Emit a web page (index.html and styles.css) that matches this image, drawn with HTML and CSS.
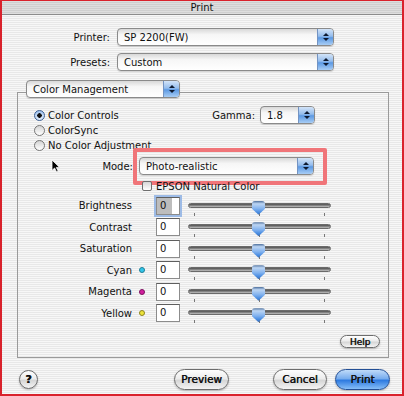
FILE: index.html
```html
<!DOCTYPE html>
<html lang="en">
<head>
    <meta charset="UTF-8">
    <title>Print</title>
    <link rel="stylesheet" href="styles.css">
</head>
<body>
<div class="window">
    <div class="titlebar">Print</div>

    <div class="content">
        <div class="field-row">
            <span class="field-label">Printer:</span>
            <div class="popup popup-wide">
                <span class="popup-label">SP 2200(FW)</span>
                <span class="popup-cap"></span>
            </div>
        </div>
        <div class="field-row">
            <span class="field-label">Presets:</span>
            <div class="popup popup-wide">
                <span class="popup-label">Custom</span>
                <span class="popup-cap"></span>
            </div>
        </div>

        <!-- Color Management panel -->
        <div class="group">
            <div class="popup popup-panel">
                <span class="popup-label">Color Management</span>
                <span class="popup-cap"></span>
            </div>

            <div class="group-top">
                <div class="radio-list">
                    <div class="radio"><span class="radio-dot checked"></span>Color Controls</div>
                    <div class="radio"><span class="radio-dot"></span>ColorSync</div>
                    <div class="radio"><span class="radio-dot"></span>No Color Adjustment</div>
                </div>
                <div class="gamma">
                    <span>Gamma:</span>
                    <div class="popup popup-gamma">
                        <span class="popup-label">1.8</span>
                        <span class="popup-cap"></span>
                    </div>
                </div>
            </div>

            <div class="mode-row">
                <span class="mode-label">Mode:</span>
                <div class="mode-wrap">
                    <div class="popup popup-mode">
                        <span class="popup-label">Photo-realistic</span>
                        <span class="popup-cap"></span>
                    </div>
                    <div class="highlight"></div>
                </div>
            </div>

            <div class="check-row">
                <span class="checkbox"></span>EPSON Natural Color
            </div>

            <div class="sliders">
                <div class="slider-row">
                    <span class="slider-label">Brightness</span>
                    <span class="swatch"></span>
                    <span class="num-field focused">0</span>
                    <div class="slider"><div class="track"></div><div class="ticks"><i></i><i></i><i></i></div><span class="thumb"></span></div>
                </div>
                <div class="slider-row">
                    <span class="slider-label">Contrast</span>
                    <span class="swatch"></span>
                    <span class="num-field">0</span>
                    <div class="slider"><div class="track"></div><div class="ticks"><i></i><i></i><i></i></div><span class="thumb"></span></div>
                </div>
                <div class="slider-row">
                    <span class="slider-label">Saturation</span>
                    <span class="swatch"></span>
                    <span class="num-field">0</span>
                    <div class="slider"><div class="track"></div><div class="ticks"><i></i><i></i><i></i></div><span class="thumb"></span></div>
                </div>
                <div class="slider-row">
                    <span class="slider-label">Cyan</span>
                    <span class="swatch cyan"></span>
                    <span class="num-field">0</span>
                    <div class="slider"><div class="track"></div><div class="ticks"><i></i><i></i><i></i></div><span class="thumb"></span></div>
                </div>
                <div class="slider-row">
                    <span class="slider-label">Magenta</span>
                    <span class="swatch magenta"></span>
                    <span class="num-field">0</span>
                    <div class="slider"><div class="track"></div><div class="ticks"><i></i><i></i><i></i></div><span class="thumb"></span></div>
                </div>
                <div class="slider-row">
                    <span class="slider-label">Yellow</span>
                    <span class="swatch yellow"></span>
                    <span class="num-field">0</span>
                    <div class="slider"><div class="track"></div><div class="ticks"><i></i><i></i><i></i></div><span class="thumb"></span></div>
                </div>
            </div>

            <div class="help-row">
                <button class="push push-small">Help</button>
            </div>

            <!-- mouse pointer -->
            <svg class="cursor" width="10" height="14" viewBox="0 0 10 14">
                <path d="M1 1 V11.5 L3.6 9 L5.6 13 L7.2 12.2 L5.3 8.4 H8.6 Z" fill="#000" stroke="#fff" stroke-width="0.8"/>
            </svg>
        </div>

        <div class="buttons">
            <button class="push round-help">?</button>
            <button class="push btn-preview">Preview</button>
            <button class="push btn-cancel">Cancel</button>
            <button class="push push-default btn-print">Print</button>
        </div>
    </div>
</div>
</body>
</html>
```

FILE: styles.css
```css
/* Aqua print sheet */
* {
    box-sizing: border-box;
}

body {
    margin: 0;
    font-family: "DejaVu Sans", "Lucida Grande", sans-serif;
    font-size: 10px;
    color: #111;
}

.window {
    width: 404px;
    height: 396px;
    border: 2px solid #d9222c;
    border-top-width: 1px;
    background: repeating-linear-gradient(to bottom, #f7f7f7 0 1px, #e8e8e8 1px 2px);
}

.titlebar {
    height: 14px;
    line-height: 13px;
    text-align: center;
    background: repeating-linear-gradient(to bottom, #dedede 0 1px, #cfcfcf 1px 2px);
    border-bottom: 1px solid #8c8c8c;
}

.content {
    padding: 13px 13px 0 15px;
}

.field-row {
    display: flex;
    align-items: center;
}

.field-row + .field-row {
    margin-top: 7px;
}

.field-label {
    width: 93px;
    margin-right: 7px;
    text-align: right;
}

/* popup menus */
.popup {
    display: flex;
    align-items: center;
    height: 18px;
    padding-left: 6px;
    border: 1px solid #8a8a8a;
    border-radius: 4px;
    background: linear-gradient(#d8d8d8, #f6f6f6 35%, #ffffff);
    box-shadow: 0 1px 1px rgba(0, 0, 0, 0.15);
}

.popup-label {
    flex: 1;
    white-space: nowrap;
}

.popup-cap {
    width: 16px;
    align-self: stretch;
    display: flex;
    flex-direction: column;
    align-items: center;
    justify-content: center;
    gap: 2px;
    border-left: 1px solid #7393c2;
    border-radius: 0 3px 3px 0;
    background: linear-gradient(#d3e4f8, #94bcec 45%, #5c99e3 55%, #a8cdf5);
}

.popup-cap::before {
    content: "";
    border: 3px solid transparent;
    border-top: 0;
    border-bottom: 3px solid #0e1a30;
}

.popup-cap::after {
    content: "";
    border: 3px solid transparent;
    border-bottom: 0;
    border-top: 3px solid #0e1a30;
}

.popup-wide {
    width: 217px;
}

.popup-panel {
    width: 154px;
    margin: -13px 0 0 8px;
}

.popup-gamma {
    width: 55px;
}

.popup-mode {
    width: 175px;
}

/* group box */
.group {
    position: relative;
    margin-top: 21px;
    padding-bottom: 9px;
    border: 1px solid #9a9a9a;
}

.group-top {
    display: flex;
    align-items: flex-start;
    margin-top: 10px;
    padding-left: 16px;
}

.radio {
    display: flex;
    align-items: center;
    gap: 3px;
    height: 15px;
}

.radio-dot {
    width: 11px;
    height: 11px;
    border: 1px solid #767676;
    border-radius: 50%;
    background: linear-gradient(#d4d4d4, #ffffff);
}

.radio-dot.checked {
    border-color: #3c5f93;
    background: radial-gradient(circle, #111 0 2px, transparent 2.5px), linear-gradient(#9fc2ee, #e0ecfb);
}

.gamma {
    display: flex;
    align-items: center;
    gap: 5px;
    margin: -2px 73px 0 auto;
}

.mode-row {
    display: flex;
    align-items: center;
    margin-top: 4px;
}

.mode-label {
    width: 115px;
    margin-right: 6px;
    text-align: right;
}

.mode-wrap {
    position: relative;
}

.highlight {
    position: absolute;
    inset: -9px -13px -10px -6px;
    border: 4px solid #f07579;
    border-radius: 2px;
}

.check-row {
    position: relative;
    display: flex;
    align-items: center;
    gap: 4px;
    height: 12px;
    margin-top: 5px;
    padding-left: 124px;
}

.checkbox {
    width: 10px;
    height: 10px;
    border: 1px solid #6e6e6e;
    border-radius: 2px;
    background: linear-gradient(#d6d6d6, #ffffff);
}

/* sliders */
.sliders {
    margin-top: 3px;
}

.slider-row {
    display: flex;
    align-items: center;
    height: 21.5px;
}

.slider-label {
    width: 114px;
    text-align: right;
}

.swatch {
    width: 6px;
    height: 6px;
    margin-left: 7px;
    border-radius: 50%;
}

.swatch.cyan {
    background: #33c6ea;
    border: 1px solid #1f7f98;
}

.swatch.magenta {
    background: #d21e9e;
    border: 1px solid #7d1360;
}

.swatch.yellow {
    background: #ece33a;
    border: 1px solid #8d8420;
}

.num-field {
    width: 24px;
    height: 18px;
    margin-left: 11px;
    padding-left: 3px;
    line-height: 16px;
    border: 1px solid #8c8c8c;
    border-top-color: #5e5e5e;
    background: #fff;
}

.num-field.focused {
    background: linear-gradient(to right, #bdbdbd 0 15px, #fff 15px);
    box-shadow: 0 0 0 2px #9dbbe6;
}

.slider {
    position: relative;
    width: 143px;
    height: 20px;
    margin-left: 8px;
}

.track {
    height: 5px;
    margin-top: 7px;
    border-radius: 3px;
    border: 1px solid #6a6a6a;
    background: linear-gradient(#4e4e4e, #8e8e8e 60%, #c4c4c4);
}

.ticks {
    display: flex;
    justify-content: space-between;
    margin-top: 5px;
    padding: 0 6px;
}

.ticks i {
    width: 1px;
    height: 3px;
    background: #777;
}

.thumb {
    position: absolute;
    left: 64px;
    top: 5px;
    width: 13px;
    height: 14px;
    border-radius: 3px 3px 0 0;
    clip-path: polygon(0 0, 100% 0, 100% 58%, 50% 100%, 0 58%);
    background: linear-gradient(#4d6f9c, #bcd5f3 20%, #82b2ee 55%, #4b8ee3 80%, #3a6fb8);
}

.help-row {
    display: flex;
    justify-content: flex-end;
    margin-top: 11px;
    padding-right: 8px;
}

/* push buttons */
.push {
    display: flex;
    align-items: center;
    justify-content: center;
    height: 21px;
    padding: 0;
    font: inherit;
    font-size: 10.5px;
    color: #111;
    text-shadow: 0.4px 0 0 #111;
    border: 1px solid #6c6c6c;
    border-radius: 11px;
    background: linear-gradient(#fefefe, #ececec 45%, #d6d6d6 55%, #f4f4f4);
    box-shadow: 0 1px 2px rgba(0, 0, 0, 0.25);
}

.push-small {
    width: 40px;
    height: 13px;
    font-size: 9px;
    border-radius: 7px;
}

.push-default {
    border-color: #234f95;
    background: linear-gradient(#c0dbf9, #78adee 45%, #2f7be0 55%, #86bef8);
}

.buttons {
    display: flex;
    align-items: center;
    height: 22px;
    margin-top: 10px;
    padding-left: 2px;
    margin-right: -1px;
}

.round-help {
    width: 19px;
    height: 19px;
    border-radius: 50%;
    font-weight: bold;
    font-size: 11px;
}

.btn-preview {
    width: 55px;
    margin-left: auto;
}

.btn-cancel {
    width: 54px;
    margin-left: 44px;
}

.btn-print {
    width: 55px;
    margin-left: 8px;
}

.cursor {
    position: absolute;
    left: 33px;
    top: 66px;
}
```
